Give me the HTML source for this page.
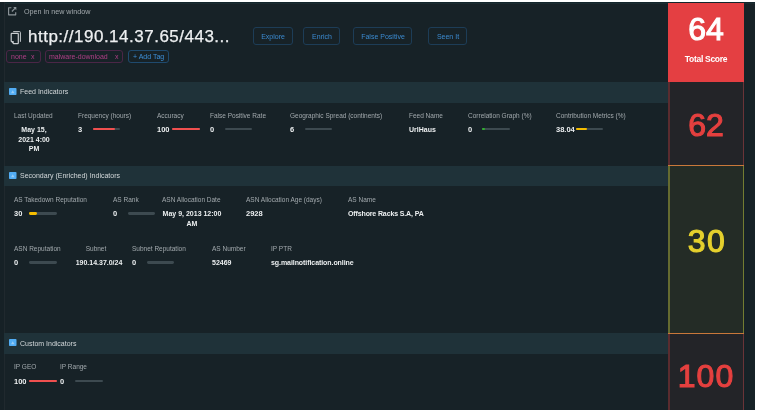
<!DOCTYPE html>
<html><head><meta charset="utf-8"><style>
html,body{margin:0;padding:0;width:760px;height:410px;overflow:hidden;background:#ffffff;}
body{position:relative;font-family:"Liberation Sans",sans-serif;}
.t{position:absolute;white-space:nowrap;will-change:transform;}
.r{position:absolute;}
</style></head><body>
<div id="w" style="position:absolute;left:0;top:0;width:760px;height:410px;filter:blur(0.3px);">
<div class="r" style="left:0px;top:2px;width:755px;height:408px;background:#172227;"></div>
<div class="r" style="left:0px;top:2px;width:755px;height:1px;background:#13262c;"></div>
<div class="r" style="left:0px;top:3px;width:755px;height:1px;background:#1c2c31;"></div>
<div class="r" style="left:0px;top:2px;width:4px;height:408px;background:#162126;"></div>
<div class="r" style="left:4px;top:2px;width:1px;height:408px;background:#20292e;"></div>
<svg class="r" style="left:7px;top:6px" width="11" height="11" viewBox="0 0 11 11">
<path d="M4.4 1.7H1.6V8.8H8.7V6.2" fill="none" stroke="#8d959a" stroke-width="1.15" stroke-linejoin="round"/>
<path d="M4.9 5.5L8.2 2.2" fill="none" stroke="#8d959a" stroke-width="1.2"/><path d="M6.2 1.1H9.3V4.2Z" fill="#8d959a"/>
</svg>
<div class="t" style="left:24.3px;top:2px;font-size:7.2px;line-height:20px;color:#a3aaae;font-weight:400;">Open in new window</div>
<svg class="r" style="left:10px;top:30px" width="12" height="15" viewBox="0 0 12 15">
<path d="M3.2 1.6H9.6Q10.4 1.6 10.4 2.4V11.8" fill="none" stroke="#c9cdd0" stroke-width="1"/>
<path d="M2.5 3.3H7.6Q8.3 3.3 8.3 4V12.9Q8.3 13.6 7.6 13.6H3.6L1.2 11.2V4Q1.2 3.3 1.9 3.3Z" fill="none" stroke="#c9cdd0" stroke-width="1.2" stroke-linejoin="round"/>
<path d="M1.4 11.1H3.7V13.4Z" fill="#c9cdd0"/>
</svg>
<div class="t" style="left:28.0px;top:27px;font-size:17px;line-height:20px;color:#eef0f1;font-weight:400;letter-spacing:0.5px;-webkit-text-stroke:0.25px #eef0f1;">http://190.14.37.65/443...</div>
<div class="r" style="left:253px;top:27px;width:40px;height:18px;background:transparent;border:1.4px solid #1d3d57;border-radius:3px;box-sizing:border-box;"></div>
<div class="t" style="left:73.0px;width:400px;text-align:center;top:27px;font-size:7px;line-height:20px;color:#3b8ad0;font-weight:400;">Explore</div>
<div class="r" style="left:303px;top:27px;width:37px;height:18px;background:transparent;border:1.4px solid #1d3d57;border-radius:3px;box-sizing:border-box;"></div>
<div class="t" style="left:121.5px;width:400px;text-align:center;top:27px;font-size:7px;line-height:20px;color:#3b8ad0;font-weight:400;">Enrich</div>
<div class="r" style="left:353px;top:27px;width:59px;height:18px;background:transparent;border:1.4px solid #1d3d57;border-radius:3px;box-sizing:border-box;"></div>
<div class="t" style="left:182.5px;width:400px;text-align:center;top:27px;font-size:7px;line-height:20px;color:#3b8ad0;font-weight:400;">False Positive</div>
<div class="r" style="left:428px;top:27px;width:39px;height:18px;background:transparent;border:1.4px solid #1d3d57;border-radius:3px;box-sizing:border-box;"></div>
<div class="t" style="left:247.5px;width:400px;text-align:center;top:27px;font-size:7px;line-height:20px;color:#3b8ad0;font-weight:400;">Seen It</div>
<div class="r" style="left:6px;top:50px;width:34.5px;height:13px;background:transparent;border:1px solid #4b2647;border-radius:3px;box-sizing:border-box;"></div>
<div class="t" style="left:11px;top:47px;font-size:7px;line-height:20px;color:#b03f86;font-weight:400;">none</div>
<div class="t" style="left:31px;top:47px;font-size:7px;line-height:20px;color:#b03f86;font-weight:400;">x</div>
<div class="r" style="left:45px;top:50px;width:78px;height:13px;background:transparent;border:1px solid #4b2647;border-radius:3px;box-sizing:border-box;"></div>
<div class="t" style="left:49.2px;top:47px;font-size:7px;line-height:20px;color:#b03f86;font-weight:400;">malware-download</div>
<div class="t" style="left:114.5px;top:47px;font-size:7px;line-height:20px;color:#b03f86;font-weight:400;">x</div>
<div class="r" style="left:128px;top:50px;width:40.5px;height:13px;background:transparent;border:1px solid #1f4a6e;border-radius:3px;box-sizing:border-box;"></div>
<div class="t" style="left:133.0px;top:47px;font-size:7px;line-height:20px;color:#3d8fd8;font-weight:400;">+ Add Tag</div>
<div class="r" style="left:4px;top:82px;width:665px;height:21px;background:#1f3239;"></div>
<svg class="r" style="left:9px;top:88px" width="7.5" height="7" viewBox="0 0 7.5 7"><rect width="7.5" height="7" rx="0.8" fill="#52adf4"/><path d="M2.0 5.3L3.75 2.3L5.5 5.3Z" fill="#98cdf6"/></svg>
<div class="t" style="left:20px;top:82px;font-size:7px;line-height:20px;color:#d3d8da;font-weight:400;">Feed Indicators</div>
<div class="r" style="left:4px;top:165.5px;width:665px;height:20.5px;background:#1f3239;"></div>
<svg class="r" style="left:9px;top:171.5px" width="7.5" height="7" viewBox="0 0 7.5 7"><rect width="7.5" height="7" rx="0.8" fill="#52adf4"/><path d="M2.0 5.3L3.75 2.3L5.5 5.3Z" fill="#98cdf6"/></svg>
<div class="t" style="left:20px;top:166px;font-size:7px;line-height:20px;color:#d3d8da;font-weight:400;">Secondary (Enriched) Indicators</div>
<div class="r" style="left:4px;top:333px;width:665px;height:21px;background:#1f3239;"></div>
<svg class="r" style="left:9px;top:339px" width="7.5" height="7" viewBox="0 0 7.5 7"><rect width="7.5" height="7" rx="0.8" fill="#52adf4"/><path d="M2.0 5.3L3.75 2.3L5.5 5.3Z" fill="#98cdf6"/></svg>
<div class="t" style="left:20px;top:334px;font-size:7px;line-height:20px;color:#d3d8da;font-weight:400;">Custom Indicators</div>
<div class="t" style="left:14px;top:106px;font-size:6.5px;line-height:20px;color:#a2a9ad;font-weight:400;">Last Updated</div>
<div class="t" style="left:-166.3px;width:400px;text-align:center;top:120px;font-size:7px;line-height:20px;color:#eceff0;font-weight:700;">May 15,</div>
<div class="t" style="left:-166.3px;width:400px;text-align:center;top:130px;font-size:7px;line-height:20px;color:#eceff0;font-weight:700;">2021 4:00</div>
<div class="t" style="left:-166.3px;width:400px;text-align:center;top:139px;font-size:7px;line-height:20px;color:#eceff0;font-weight:700;">PM</div>
<div class="t" style="left:78.2px;top:106px;font-size:6.5px;line-height:20px;color:#a2a9ad;font-weight:400;">Frequency (hours)</div>
<div class="t" style="left:78.2px;top:120px;font-size:7.5px;line-height:20px;color:#eceff0;font-weight:700;">3</div>
<div class="r" style="left:92.8px;top:127.69999999999999px;width:27.6px;height:2.8px;background:#3d4a50;border-radius:1.4px;"></div>
<div class="r" style="left:92.8px;top:127.69999999999999px;width:22.5px;height:2.8px;background:#f0504f;border-radius:1.4px;"></div>
<div class="t" style="left:156.8px;top:106px;font-size:6.5px;line-height:20px;color:#a2a9ad;font-weight:400;">Accuracy</div>
<div class="t" style="left:156.8px;top:120px;font-size:7.5px;line-height:20px;color:#eceff0;font-weight:700;">100</div>
<div class="r" style="left:172px;top:127.69999999999999px;width:27.8px;height:2.8px;background:#3d4a50;border-radius:1.4px;"></div>
<div class="r" style="left:172px;top:127.69999999999999px;width:27.8px;height:2.8px;background:#f0504f;border-radius:1.4px;"></div>
<div class="t" style="left:209.9px;top:106px;font-size:6.5px;line-height:20px;color:#a2a9ad;font-weight:400;">False Positive Rate</div>
<div class="t" style="left:209.9px;top:120px;font-size:7.5px;line-height:20px;color:#eceff0;font-weight:700;">0</div>
<div class="r" style="left:224.8px;top:127.69999999999999px;width:27.6px;height:2.8px;background:#3d4a50;border-radius:1.4px;"></div>
<div class="t" style="left:289.6px;top:106px;font-size:6.5px;line-height:20px;color:#a2a9ad;font-weight:400;">Geographic Spread (continents)</div>
<div class="t" style="left:289.6px;top:120px;font-size:7.5px;line-height:20px;color:#eceff0;font-weight:700;">6</div>
<div class="r" style="left:304.5px;top:127.69999999999999px;width:27.6px;height:2.8px;background:#3d4a50;border-radius:1.4px;"></div>
<div class="t" style="left:408.9px;top:106px;font-size:6.5px;line-height:20px;color:#a2a9ad;font-weight:400;">Feed Name</div>
<div class="t" style="left:408.9px;top:120px;font-size:7px;line-height:20px;color:#eceff0;font-weight:700;">UrlHaus</div>
<div class="t" style="left:467.5px;top:106px;font-size:6.5px;line-height:20px;color:#a2a9ad;font-weight:400;">Correlation Graph (%)</div>
<div class="t" style="left:467.5px;top:120px;font-size:7.5px;line-height:20px;color:#eceff0;font-weight:700;">0</div>
<div class="r" style="left:482.4px;top:127.69999999999999px;width:27.6px;height:2.8px;background:#3d4a50;border-radius:1.4px;"></div>
<div class="r" style="left:482.4px;top:127.69999999999999px;width:2.8px;height:2.8px;background:#2fae2f;border-radius:1.4px;"></div>
<div class="t" style="left:556.3px;top:106px;font-size:6.5px;line-height:20px;color:#a2a9ad;font-weight:400;">Contribution Metrics (%)</div>
<div class="t" style="left:556.3px;top:120px;font-size:7.5px;line-height:20px;color:#eceff0;font-weight:700;">38.04</div>
<div class="r" style="left:575.8px;top:127.69999999999999px;width:27.6px;height:2.8px;background:#3d4a50;border-radius:1.4px;"></div>
<div class="r" style="left:575.8px;top:127.69999999999999px;width:11px;height:2.8px;background:#f5bd00;border-radius:1.4px;"></div>
<div class="t" style="left:14px;top:190px;font-size:6.5px;line-height:20px;color:#a2a9ad;font-weight:400;">AS Takedown Reputation</div>
<div class="t" style="left:14px;top:204px;font-size:7.5px;line-height:20px;color:#eceff0;font-weight:700;">30</div>
<div class="r" style="left:29.1px;top:211.79999999999998px;width:27.5px;height:2.8px;background:#3d4a50;border-radius:1.4px;"></div>
<div class="r" style="left:29.1px;top:211.79999999999998px;width:8.3px;height:2.8px;background:#f5bd00;border-radius:1.4px;"></div>
<div class="t" style="left:112.5px;top:190px;font-size:6.5px;line-height:20px;color:#a2a9ad;font-weight:400;">AS Rank</div>
<div class="t" style="left:112.5px;top:204px;font-size:7.5px;line-height:20px;color:#eceff0;font-weight:700;">0</div>
<div class="r" style="left:127.6px;top:211.79999999999998px;width:27.5px;height:2.8px;background:#3d4a50;border-radius:1.4px;"></div>
<div class="t" style="left:162.1px;top:190px;font-size:6.5px;line-height:20px;color:#a2a9ad;font-weight:400;">ASN Allocation Date</div>
<div class="t" style="left:-8.099999999999994px;width:400px;text-align:center;top:204px;font-size:7px;line-height:20px;color:#eceff0;font-weight:700;">May 9, 2013 12:00</div>
<div class="t" style="left:-8.199999999999989px;width:400px;text-align:center;top:214px;font-size:7px;line-height:20px;color:#eceff0;font-weight:700;">AM</div>
<div class="t" style="left:246px;top:190px;font-size:6.5px;line-height:20px;color:#a2a9ad;font-weight:400;">ASN Allocation Age (days)</div>
<div class="t" style="left:246px;top:204px;font-size:7.5px;line-height:20px;color:#eceff0;font-weight:700;">2928</div>
<div class="t" style="left:348.4px;top:190px;font-size:6.5px;line-height:20px;color:#a2a9ad;font-weight:400;">AS Name</div>
<div class="t" style="left:348.4px;top:204px;font-size:7px;line-height:20px;color:#eceff0;font-weight:700;letter-spacing:-0.13px;">Offshore Racks S.A, PA</div>
<div class="t" style="left:13.75px;top:239px;font-size:6.5px;line-height:20px;color:#a2a9ad;font-weight:400;">ASN Reputation</div>
<div class="t" style="left:14px;top:253px;font-size:7.5px;line-height:20px;color:#eceff0;font-weight:700;">0</div>
<div class="r" style="left:29.25px;top:261.1px;width:27.5px;height:2.8px;background:#3d4a50;border-radius:1.4px;"></div>
<div class="t" style="left:-103.6px;width:400px;text-align:center;top:239px;font-size:6.5px;line-height:20px;color:#a2a9ad;font-weight:400;">Subnet</div>
<div class="t" style="left:-101.25px;width:400px;text-align:center;top:253px;font-size:7px;line-height:20px;color:#eceff0;font-weight:700;">190.14.37.0/24</div>
<div class="t" style="left:131.75px;top:239px;font-size:6.5px;line-height:20px;color:#a2a9ad;font-weight:400;">Subnet Reputation</div>
<div class="t" style="left:131.75px;top:253px;font-size:7.5px;line-height:20px;color:#eceff0;font-weight:700;">0</div>
<div class="r" style="left:146.75px;top:261.1px;width:27.5px;height:2.8px;background:#3d4a50;border-radius:1.4px;"></div>
<div class="t" style="left:212px;top:239px;font-size:6.5px;line-height:20px;color:#a2a9ad;font-weight:400;">AS Number</div>
<div class="t" style="left:212px;top:253px;font-size:7px;line-height:20px;color:#eceff0;font-weight:700;">52469</div>
<div class="t" style="left:270.5px;top:239px;font-size:6.5px;line-height:20px;color:#a2a9ad;font-weight:400;">IP PTR</div>
<div class="t" style="left:270.5px;top:253px;font-size:7px;line-height:20px;color:#eceff0;font-weight:700;letter-spacing:-0.07px;">sg.mailnotification.online</div>
<div class="t" style="left:14px;top:357px;font-size:6.5px;line-height:20px;color:#a2a9ad;font-weight:400;">IP GEO</div>
<div class="t" style="left:14px;top:372px;font-size:7.5px;line-height:20px;color:#eceff0;font-weight:700;">100</div>
<div class="r" style="left:29px;top:379.6px;width:27.7px;height:2.8px;background:#3d4a50;border-radius:1.4px;"></div>
<div class="r" style="left:29px;top:379.6px;width:27.7px;height:2.8px;background:#f0504f;border-radius:1.4px;"></div>
<div class="t" style="left:59.8px;top:357px;font-size:6.5px;line-height:20px;color:#a2a9ad;font-weight:400;">IP Range</div>
<div class="t" style="left:59.8px;top:372px;font-size:7.5px;line-height:20px;color:#eceff0;font-weight:700;">0</div>
<div class="r" style="left:75.1px;top:379.6px;width:27.5px;height:2.8px;background:#3d4a50;border-radius:1.4px;"></div>
<div class="r" style="left:668.1px;top:2.5px;width:76.2px;height:79.5px;background:#e43f42;"></div>
<div class="t" style="left:506.0px;width:400px;text-align:center;top:19px;font-size:32px;line-height:20px;color:#ffffff;font-weight:400;-webkit-text-stroke:1.1px #ffffff;">64</div>
<div class="t" style="left:506.29999999999995px;width:400px;text-align:center;top:49px;font-size:8.5px;line-height:20px;color:#ffffff;font-weight:700;letter-spacing:-0.3px;">Total Score</div>
<div class="r" style="left:668.1px;top:82px;width:76.2px;height:83px;background:#232428;border-left:2px solid #5a2c2f;border-right:1.6px solid #6a3438;box-sizing:border-box;"></div>
<div class="t" style="left:506.29999999999995px;width:400px;text-align:center;top:115px;font-size:32px;line-height:20px;color:#e5403f;font-weight:400;-webkit-text-stroke:1.1px #e5403f;">62</div>
<div class="r" style="left:668.1px;top:166.3px;width:76.2px;height:166.5px;background:#242c26;border-left:2px solid #656b30;border-right:1.6px solid #737c32;box-sizing:border-box;"></div>
<div class="r" style="left:668.1px;top:164.9px;width:76.2px;height:1.5px;background:#c9783a;"></div>
<div class="t" style="left:507px;width:400px;text-align:center;top:231px;font-size:32px;line-height:20px;color:#e5d02d;font-weight:400;letter-spacing:1.5px;-webkit-text-stroke:1.1px #e5d02d;">30</div>
<div class="r" style="left:668.1px;top:334.2px;width:76.2px;height:80px;background:#232428;border-left:2px solid #5a2c2f;border-right:1.6px solid #6a3438;box-sizing:border-box;"></div>
<div class="r" style="left:668.1px;top:332.8px;width:76.2px;height:1.5px;background:#c9783a;"></div>
<div class="t" style="left:505.9px;width:400px;text-align:center;top:366px;font-size:32px;line-height:20px;color:#e5403f;font-weight:400;letter-spacing:1px;-webkit-text-stroke:1.1px #e5403f;">100</div>
</div></body></html>
